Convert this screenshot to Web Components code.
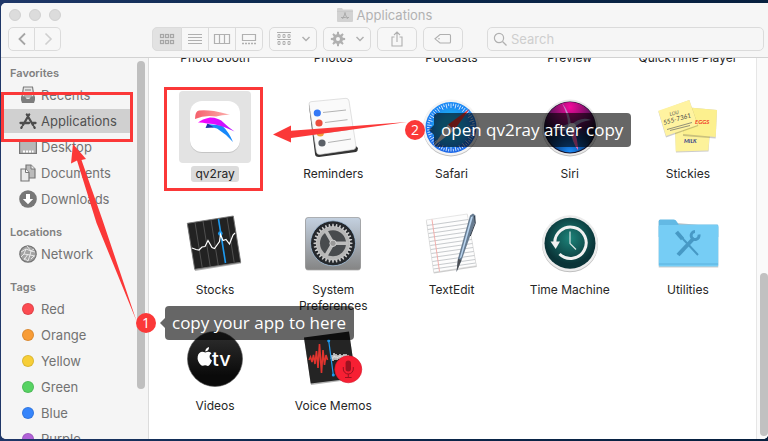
<!DOCTYPE html>
<html lang="en">
<head>
<meta charset="utf-8">
<title>Applications</title>
<style>
html, body { height: 100%; margin: 0; }
body { position: relative; overflow: hidden; background: linear-gradient(90deg, #1f3768, #0d2a50 35%, #07203f 100%); font-family: Inter, "Liberation Sans", sans-serif; }
</style>
</head>
<body>
<finder-window></finder-window>
<guide-overlay></guide-overlay>

<script>
const shadow = (el, html) => { el.attachShadow({ mode: 'open' }).innerHTML = html; };

const poly = (n, r1, r2, cx, cy) => {
  let p = [];
  for (let i = 0; i < n; i++) {
    for (const [o, r] of [[-0.3, r1], [-0.16, r2], [0.16, r2], [0.3, r1]]) {
      const a = (i + o) / n * Math.PI * 2;
      p.push((cx + Math.cos(a) * r).toFixed(2) + ',' + (cy + Math.sin(a) * r).toFixed(2));
    }
  }
  return p.join(' ');
};

const ticks = Array.from({ length: 60 }, (_, i) =>
  `<line x1="36" y1="12.5" x2="36" y2="${i % 2 ? 15 : 17}" transform="rotate(${i * 6} 36 36.5)"/>`).join('');

/* size: [width, height], body: svg markup */
const ICONS = {
  back: [26, 22, '<path d="M16 5.5 10.5 11 16 16.5" fill="none" stroke="#a5a5a5" stroke-width="1.8"/>'],
  forward: [26, 22, '<path d="M10.5 5.5 16 11l-5.5 5.5" fill="none" stroke="#cfcfcf" stroke-width="1.6"/>'],
  grid: [16, 12, '<g fill="none" stroke="#a6a6a6" stroke-width="1.2"><rect x="1.5" y="1.5" width="3" height="3"/><rect x="6.5" y="1.5" width="3" height="3"/><rect x="11.5" y="1.5" width="3" height="3"/><rect x="1.5" y="7.5" width="3" height="3"/><rect x="6.5" y="7.5" width="3" height="3"/><rect x="11.5" y="7.5" width="3" height="3"/></g>'],
  list: [14, 12, '<path d="M0 1.5h14M0 4.5h14M0 7.5h14M0 10.5h14" stroke="#b0b0b0"/>'],
  columns: [16, 12, '<path d="M.5 1.5h15v9H.5zM5.5 1.5v9M10.5 1.5v9" fill="none" stroke="#b0b0b0" stroke-width="1.2"/>'],
  gallery: [16, 12, '<path d="M1.5 1.5h13v6h-13z" fill="none" stroke="#b0b0b0" stroke-width="1.2"/><path d="M1 10.5h14" stroke="#b0b0b0" stroke-width="1.6" stroke-dasharray="2 1"/>'],
  arrange: [16, 14, '<g fill="none" stroke="#b0b0b0"><path d="M1 .5h14M1 7.5h14"/><path d="M2 2.5h2v3H2zM7 2.5h2v3H7zM12 2.5h2v3h-2zM2 9.5h2v3H2zM7 9.5h2v3H7zM12 9.5h2v3h-2z"/></g>'],
  chevron: [10, 10, '<path d="M1.5 3 5 6.5 8.5 3" fill="none" stroke="#b0b0b0" stroke-width="1.5"/>'],
  gear: [16, 16, `<polygon points="${poly(8, 5, 7.2, 8, 8)}" fill="#b0b0b0"/><circle cx="8" cy="8" r="2" fill="#f6f6f6"/>`],
  share: [14, 16, '<path d="M4.5 6H2v9h10V6H9.500M7 11V1.500M4 4l3-3 3 3" fill="none" stroke="#b0b0b0" stroke-width="1.100"/>'],
  tag: [18, 12, '<path d="M6 1.500h9.500q1 0 1 1v6.500q0 1-1 1H6L1 5.800z" fill="none" stroke="#b0b0b0" stroke-width="1.100"/><circle cx="5" cy="5.700" r=".8" fill="#b0b0b0"/>'],
  search: [14, 14, '<circle cx="6" cy="6" r="4.600" fill="none" stroke="#b0b0b0" stroke-width="1.200"/><path d="m9.500 9.500 4 4" stroke="#b0b0b0" stroke-width="1.300"/>'],
  folder: [16, 14, '<path d="M0 1q0-1 1-1h4l1 1.500h9q1 0 1 1V13q0 1-1 1H1q-1 0-1-1z" fill="#d2d2d2"/><path d="M0 3.500h16" stroke="#c4c4c4" stroke-width=".6"/><path d="M8.600 4.500 5.500 11M7.400 4.500 10.500 11M4 9.500h4.800M10 9.500h2" stroke="#aaa" stroke-width="1"/>'],
  recents: [18, 18, '<path d="M4.500 1h9L15 11H3z" fill="#e4e4e4" stroke="#7d7d7d" stroke-width="1.200"/><path d="M6 4h6M5.500 6.500h7M5 9h8" stroke="#7d7d7d"/><path d="M2 10.500h4q1 2.500 3 2.500t3-2.500h4V14l-1 3H3l-1-3z" fill="#7d7d7d"/>'],
  apps: [18, 18, '<g stroke="#4c4c4c" stroke-width="2.300" stroke-linecap="round" fill="none"><path d="M10.200 2.500 4 13M7.800 2.500 14 13M1.500 11h8.500M14 11h2.500M2.800 15l-.5.8M15.200 15l.5.8"/></g>'],
  desktop: [18, 14, '<rect x=".6" y=".6" width="16.800" height="12.800" fill="#b7b7b7" stroke="#777" stroke-width="1.200"/><path d="M4 11.500h2M7 11.500h2M10 11.500h2M13 11.500h1.500" stroke="#fff" stroke-width="1.800"/>'],
  docs: [18, 18, '<path d="M7 1h5l4 4v9H7z" fill="#bbb" stroke="#777" stroke-width="1.200"/><path d="M12 1v4h4" fill="#eee" stroke="#777"/><path d="M2 5h4.500L10 8.500V17H2z" fill="#e9e9e9" stroke="#777" stroke-width="1.200"/><path d="M6.500 5v3.500H10" fill="#fff" stroke="#777"/>'],
  downloads: [18, 18, '<circle cx="9" cy="9" r="8.800" fill="#777"/><path d="M7 4h4v5h3.200L9 14.300 3.800 9H7z" fill="#fff"/>'],
  network: [18, 18, '<circle cx="9" cy="9" r="8.200" fill="#a3a3a3" stroke="#747474" stroke-width="1.200"/><path d="M2 7 7 4l5 2 3-2M7 4 5 9l-3 3M5 9l6 1 1-4M11 10l-2 6-4-3M11 10l5 1M8 1l4 5 4 1M9 9l-4 6M12 14l3-3" stroke="#eee" stroke-width=".9" fill="none"/>'],

  qv2ray: [72, 72, `<defs><linearGradient id="a"><stop stop-color="#f55f6b"/><stop offset="1" stop-color="#fcb0ad"/></linearGradient><linearGradient id="b"><stop stop-color="#f0f"/><stop offset="1" stop-color="#b51cff"/></linearGradient></defs>
   <rect x="11" y="11" width="50" height="51" rx="12" fill="#000" opacity=".13"/><rect x="11" y="10" width="50" height="51" rx="12" fill="#fff"/>
   <path d="M27.500 33 43 34.500Q50 41 54 51 47 43 38 37.500L32 36z" fill="#1788fa"/><path d="m26.500 37 2-4.500 6.500 4z" fill="#2135a8"/>
   <path d="M19 31.500Q23 28 31 26.500 40 26.500 45 32 49 36 55.500 40.500 46 36 40 34.500 34 32.500 28 32.500 22 31 19 31.500z" fill="url(#b)"/>
   <path d="M16 28Q16 20 20 19.500 27 19 35 20 43 21.500 51 23.800 44 23.500 37 25.500 26 23.500 16 28z" fill="url(#a)"/>`],
  reminders: [72, 72, `<path d="M14 12q-2 0-2 3l6 48q0 3 4 3l37-5q2-1 2-4z" fill="#333"/>
   <path d="M12 13q0-2 2-2.300l35-3.400q2.600 0 3 2.700l7 45q0 3-2 3.400L23 63.500q-3 .3-3.600-2.500z" fill="#fafafa" stroke="#ccc" stroke-width=".6"/>
   <circle cx="20.300" cy="22" r="3.600" fill="#3478f6"/><circle cx="22" cy="32" r="3.600" fill="#eb4d3d"/><circle cx="23.300" cy="42" r="3.600" fill="#f19d38"/><circle cx="25" cy="52" r="3.600" fill="#5b6067"/>
   <path d="M26 21.500 49 19M28 31.500l22.500-2.800M29.500 41.500l22.500-3M31 51.500 54 48" stroke="#aaa" stroke-width=".9"/>`],
  safari: [72, 72, `<defs><linearGradient id="s" x2="0" y2="1"><stop stop-color="#1c8bf5"/><stop offset="1" stop-color="#1c67e8"/></linearGradient><radialGradient id="c"><stop offset=".5" stop-color="#1cb6f5"/><stop offset="1" stop-color="#1c90f0"/></radialGradient></defs>
   <circle cx="36" cy="37.500" r="28" fill="#000" opacity=".25"/><circle cx="36" cy="36.500" r="28" fill="#f4f4f4"/><circle cx="36" cy="36.500" r="25.500" fill="url(#s)"/><circle cx="36" cy="36.500" r="20" fill="url(#c)"/><g stroke="#e8f6ff" stroke-width=".8">${ticks}</g>
   <path d="M54.500 18 33 33.500l6 6z" fill="#fb3b34"/><path d="M18 55.500 33 33.500l6 6z" fill="#f3f3f3"/>`],
  siri: [72, 72, `<defs><radialGradient id="r" cx=".5" cy=".1" r=".65"><stop stop-color="#f4099c"/><stop offset=".55" stop-color="#741165"/><stop offset="1" stop-color="#100f25"/></radialGradient><radialGradient id="t" cx=".5" cy="1" r=".6"><stop stop-color="#1d8fff"/><stop offset="1" stop-color="#0080ff" stop-opacity="0"/></radialGradient></defs>
   <circle cx="36" cy="37.500" r="28" fill="#000" opacity=".25"/><circle cx="36" cy="36.500" r="28" fill="#e9e9e9"/><circle cx="36" cy="36.500" r="26" fill="#17122e"/><circle cx="36" cy="36.500" r="25.500" fill="url(#r)"/><circle cx="36" cy="36.500" r="25" fill="url(#t)"/>
   <path d="M28 12q8 10 9 22 10-9 20-5-11 1-17 8 2 14 4 22-6-8-8-20-9 2-21-2 11-1 19-4 0-9-6-21z" fill="#baf0ff" opacity=".55"/><path d="M40 38q4 12 4 21-6-8-6-19z" fill="#ff5cb5"/><circle cx="38" cy="36" r="4" fill="#fff" opacity=".8"/>`],
  stickies: [72, 72, `<path d="m23 36 35 4-1.500 20.500L24 61.500z" fill="#000" opacity=".2"/><path d="m23 36 35 4-1.700 19.500-32.600 1z" fill="#fdf29b"/>
   <path d="m32 16 33 3-1.300 28.500L31 45z" fill="#000" opacity=".2"/><path d="m32 16 33 3-1.300 27L31 43z" fill="#fcf08e"/>
   <path d="M6.300 20.500 37.300 9l9 26L14 46.500z" fill="#000" opacity=".2"/><path d="M6.300 19.700 37.300 9l8.400 25L14 45z" fill="#fff3a0"/>
   <g font-family="Lato, sans-serif" font-style="italic"><text x="18" y="25" font-size="5" fill="#555" transform="rotate(-14 18 25)">LOU</text><text x="12" y="34" font-size="6.500" fill="#444" transform="rotate(-16 12 34)">555-7361</text><text x="43" y="33" font-size="6" font-weight="700" fill="#f03c28">EGGS</text><text x="32" y="52" font-size="5.500" font-weight="700" fill="#26348a">MILK</text></g><path d="m15 38.500 25-7M18 39.500l20-5" stroke="#666" stroke-width=".7"/>`],
  stocks: [72, 72, `<path d="M8.300 17.500 54.300 10 62 56.500 16 64z" fill="#000" opacity=".3"/><path d="M8.300 16.300 54.300 9l7.400 46.300-46 7z" fill="#222" stroke="#777" stroke-width=".9"/>
   <path d="m16 15.500 7.200 45M24 14.200l7.200 45M32 13l7.200 45M48 10.500l7.200 45" stroke="#5c5c5c" stroke-width=".8"/>
   <path d="m39.500 12 7 44" stroke="#1e9af0" stroke-width="1.600"/><circle cx="41.300" cy="26.500" r="2.300" fill="#1e9af0"/>
   <path d="m13 41 4 1.500 3 .5 3-3 3-.5 3-6 4 7 2.500 1 5-7 1-7 2.500 6 3-1 3.500 4.500 3.500-9 2-2" fill="none" stroke="#fff" stroke-width="1.200"/>`],
  prefs: [72, 72, `<defs><linearGradient id="p" x2="0" y2="1"><stop stop-color="#c4d1e0"/><stop offset="1" stop-color="#858585"/></linearGradient></defs>
   <rect x="8.500" y="11.500" width="55" height="52" rx="2.500" fill="#000" opacity=".25"/><rect x="8.500" y="10.500" width="55" height="52" rx="2.500" fill="url(#p)" stroke="#888" stroke-width=".6"/>
   <circle cx="36" cy="36.300" r="22.500" fill="#25282c" stroke="#a6c2dc" stroke-width=".8"/><polygon points="${poly(32, 17, 19.5, 36, 36.3)}" fill="#c9c9c9"/><circle cx="36" cy="36.300" r="16.500" fill="#b6b6b6"/><circle cx="36" cy="36.300" r="13" fill="#484b4e"/>
   <path d="M36 36.300H51M36 36.300 28.500 23.300M36 36.300 28.500 49.300" stroke="#bcbcbc" stroke-width="3.600"/><circle cx="36" cy="36.300" r="3.200" fill="#999" stroke="#ddd" stroke-width=".8"/>`],
  textedit: [72, 72, `<path d="M11.300 14 52.300 8l9.500 52-43 6.500z" fill="#000" opacity=".2"/><path d="M11.300 13 52.300 7l9 51.700-42.600 6.600z" fill="#fdfdfd" stroke="#ccc" stroke-width=".5"/>
   <path d="M12 18.500 53.300 12.500M12.800 22.500 54 16.500M13.500 26.500 54.700 20.500M14 30.500 55.400 24.500M14.700 34.500 56 28.500M15.300 38.500 56.700 32.500M15.800 42.500 57.400 36.500M16.300 46.500 58 40.500M17 50.500 58.700 44.500M17.500 54.500 59.400 48.500M18 58.500 60 52.500M18.500 62 60.500 56" stroke="#b9bcc0" stroke-width=".8"/><path d="m17 12.500 7.500 52" stroke="#f2a7a4" stroke-width=".9"/>
   <path d="m55 8.500 3-2 2.500 2-.5 7L47 52l-5.500 13L43 51.500z" fill="#687c91"/><path d="m56 10 2-.8L46.500 50l-2 2z" fill="#b9d5f0"/><path d="m43 52 3.500 1-5 12z" fill="#4c4f54"/><path d="m59.500 9 .8 7-5 13" fill="none" stroke="#333c48" stroke-width="1"/>`],
  time: [72, 72, `<defs><radialGradient id="m" cy=".4"><stop stop-color="#1c8379"/><stop offset="1" stop-color="#0a3438"/></radialGradient></defs>
   <circle cx="36" cy="37.300" r="28" fill="#000" opacity=".25"/><circle cx="36" cy="36.300" r="28" fill="#ececec"/><circle cx="36" cy="36.300" r="25.500" fill="url(#m)"/>
   <path d="M20.800 36.500A15.700 15.700 0 1 1 25.500 47" fill="none" stroke="#f1f1f1" stroke-width="3"/><path d="M16.500 34.500h9.500l-4.300 7.500z" fill="#f1f1f1"/><path d="M36 24.500v12l6 6" fill="none" stroke="#d9e6e4" stroke-width="1.200"/>`],
  utilities: [72, 72, `<path d="M6.700 14v46.500h59.600V20z" fill="#000" opacity=".2"/><path d="M6.700 14q0-1.500 1.500-1.500h13.500q2 0 3 2l2 3H65q1.300 0 1.300 1.300V30H6.700z" fill="#63b9e4"/><path d="M6.700 19.500q0-1.500 1.500-1.500H65q1.300 0 1.300 1.500V58q0 1.500-1.300 1.500H8.200q-1.500 0-1.500-1.500z" fill="#76cdf5"/><path d="M7 57h59" stroke="#56a9d7" stroke-width=".8"/>
   <g stroke="#4799c5" fill="none"><path d="m27 27 5 6 14 15" stroke-width="2"/><path d="m24.500 25 6 7" stroke-width="4"/><path d="m42 31-16 17" stroke-width="4"/><path d="M47 27.500a4 4 0 1 1-4-3" stroke-width="3"/></g>`],
  tv: [72, 72, `<defs><linearGradient id="v" x2="0" y2="1"><stop stop-color="#303030"/><stop offset=".8" stop-color="#0a0a0a"/></linearGradient></defs>
   <circle cx="36" cy="36" r="27.500" fill="url(#v)" stroke="#555" stroke-width=".6"/>
   <path d="M26.500 29.500q2-1.200 4-.6 1.300.3 2 1.400-2.500 1.700-1.700 4.600.5 1.800 2.200 2.600-.7 2.300-2.500 4.500-1.300 1.400-3 .6-1.300-.6-2.800 0-1.700.8-3.100-.8-3.600-4.200-2.900-8.400.8-4 4.300-4.600 1.700 0 3.500.7z" fill="#fff"/><path d="M26.300 28.500q0-3.300 3.700-4.600.2 3.700-3.700 4.600z" fill="#fff"/>
   <text x="33" y="42.500" font-family="Inter, sans-serif" font-size="20" font-weight="500" fill="#fff">tv</text>`],
  memos: [72, 72, `<path d="M7 15.500 52 10l7 46-45 6z" fill="#000" opacity=".3"/><path d="m7 14.500 45-6 6.700 46.500-45 5.500z" fill="#242424"/>
   <path d="m12 37 1.500-3 1.500 5 1.500-7 1.500 9 1.500-13 1.500 17 1.500-24 2 29 1.500-23 1.500 15 1.500-10 1.500 5" fill="none" stroke="#e0342e" stroke-width="1.600"/>
   <path d="m34 36 1-4 1 6 1-8 1 7 1-6 1 6 1-5 1 4 1-5 1 5 1-4 1 3 1-4 1 5 1-5 1 5 1-4 1 3 2-1" fill="none" stroke="#ddd" stroke-width="1"/>
   <path d="m31.700 17.700 4.600 34.300" stroke="#1e9af0" stroke-width="1.200"/><circle cx="31.700" cy="17.700" r="1.500" fill="#1e9af0"/><circle cx="36.300" cy="52" r="1.500" fill="#1e9af0"/>
   <circle cx="51.300" cy="46.300" r="13.500" fill="#f71f33" stroke="#d5182a" stroke-width=".6"/><rect x="48.600" y="37.500" width="5.400" height="11" rx="2.700" fill="#9c1220"/><path d="M46.300 44v2a5 5 0 0 0 10 0v-2M51.300 51v3.500M48 54.500h6.600" fill="none" stroke="#9c1220" stroke-width="1"/>`],
  blank: [72, 72, '<rect x="11" y="10" width="50" height="50" rx="12" fill="#ddd"/>']
};

customElements.define('ui-icon', class extends HTMLElement {
  connectedCallback() {
    const [w, h, body] = ICONS[this.getAttribute('name')];
    shadow(this, `<style>:host{display:inline-flex;flex:none}svg{display:block;overflow:visible}</style>
      <svg width="${w}" height="${h}" viewBox="0 0 ${w} ${h}" aria-hidden="true">${body}</svg>`);
  }
});

customElements.define('tool-button', class extends HTMLElement {
  connectedCallback() {
    shadow(this, `<style>
      :host{display:flex;width:var(--w,48px)}
      button{box-sizing:border-box;width:100%;height:24px;padding:0;display:flex;align-items:center;justify-content:center;gap:9px;border:1px solid #dbdbdb;border-radius:5px;background:#f7f7f7}
      :host([segment]) button{border-radius:0;border-left-width:0}
      :host([segment=first]) button{border-left-width:1px;border-radius:5px 0 0 5px}
      :host([segment=last]) button{border-radius:0 5px 5px 0}
      :host([pressed]) button{background:#e2e2e2}
      </style><button type="button" aria-label="${this.getAttribute('label')}"><slot></slot></button>`);
  }
});

customElements.define('finder-toolbar', class extends HTMLElement {
  connectedCallback() {
    shadow(this, `<style>
      :host{display:block;box-sizing:border-box;height:55px;border-bottom:1px solid #d2d2d2;background:#f6f6f6}
      .title{display:grid;grid-template-columns:1fr auto 1fr;height:24px;align-items:center}
      .lights{display:flex;gap:8px;padding-left:8px}
      .lights button{width:12px;height:12px;padding:0;border-radius:50%;border:1px solid #d1d1d1;background:#dcdcdc}
      h1{margin:0;display:flex;align-items:center;gap:4px;font-size:13px;line-height:16px;font-weight:400;color:#b2b2b2}
      .tools{display:flex;padding:0 4px 0 7px}
      .group{display:flex}
      .nav{--w:26px;margin-right:91px}
      .nav .first{--w:27px}
      .views{--w:27px;margin-right:6px}
      .views .first{--w:30px}
      .actions{gap:6px;margin-right:24px}
      .small{--w:40px}
      label{box-sizing:border-box;flex:1;min-width:0;height:24px;display:flex;align-items:center;gap:4px;padding:0 5px;border:1px solid #dbdbdb;border-radius:5px}
      input{flex:1;min-width:0;border:0;padding:0;outline:0;background:none;font:13px/16px Inter,sans-serif}
      input::placeholder{color:#cecece;opacity:1}
      </style>
      <div class="title"><div class="lights"><button aria-label="Close"></button><button aria-label="Minimize"></button><button aria-label="Zoom"></button></div>
        <h1><ui-icon name="folder"></ui-icon>Applications</h1></div>
      <div class="tools">
        <div class="group nav"><tool-button class="first" label="Back" segment="first"><ui-icon name="back"></ui-icon></tool-button><tool-button label="Forward" segment="last"><ui-icon name="forward"></ui-icon></tool-button></div>
        <div class="group views"><tool-button class="first" label="Icons" segment="first" pressed><ui-icon name="grid"></ui-icon></tool-button><tool-button label="List" segment="mid"><ui-icon name="list"></ui-icon></tool-button><tool-button label="Columns" segment="mid"><ui-icon name="columns"></ui-icon></tool-button><tool-button label="Gallery" segment="last"><ui-icon name="gallery"></ui-icon></tool-button></div>
        <div class="group actions"><tool-button label="Group"><ui-icon name="arrange"></ui-icon><ui-icon name="chevron"></ui-icon></tool-button><tool-button label="Action"><ui-icon name="gear"></ui-icon><ui-icon name="chevron"></ui-icon></tool-button><tool-button class="small" label="Share"><ui-icon name="share"></ui-icon></tool-button><tool-button class="small" label="Tags"><ui-icon name="tag"></ui-icon></tool-button></div>
        <label aria-label="Search"><ui-icon name="search"></ui-icon><input type="search" placeholder="Search"></label>
      </div>`);
  }
});

customElements.define('side-item', class extends HTMLElement {
  connectedCallback() {
    const color = this.getAttribute('color');
    shadow(this, `<style>
      :host{display:block}
      a{display:flex;align-items:center;gap:4px;height:24px;padding-left:18px;margin-right:16px;font-size:13px;line-height:16px;color:#727272;text-decoration:none}
      :host([current]) a{background:#d0d0d0;color:#505050}
      .mark{width:18px;display:flex;justify-content:center}
      .dot{box-sizing:border-box;width:12px;height:12px;border-radius:50%;background:${color};border:1px solid #0000001c}
      </style><a href="#"><span class="mark">${color ? '<i class="dot"></i>' : `<ui-icon name="${this.getAttribute('icon')}"></ui-icon>`}</span><span><slot></slot></span></a>`);
  }
});

customElements.define('side-section', class extends HTMLElement {
  connectedCallback() {
    shadow(this, `<style>
      :host{display:block}
      h2{margin:0;padding-left:9px;font-size:11px;line-height:20px;font-weight:600;color:#808080}
      div{display:flex;flex-direction:column;gap:2px}
      </style><h2>${this.getAttribute('heading')}</h2><div><slot></slot></div>`);
  }
});

customElements.define('finder-sidebar', class extends HTMLElement {
  connectedCallback() {
    shadow(this, `<style>
      :host{display:block;position:relative;overflow:hidden;background:#f5f5f5;border-right:1px solid #dcdcdc}
      nav{display:flex;flex-direction:column;gap:11px;padding-top:5px}
      .thumb{position:absolute;right:3px;top:3px;width:8px;height:86%;border-radius:4px;background:#bfbfbf}
      </style>
      <nav>
      <side-section heading="Favorites"><side-item icon="recents">Recents</side-item><side-item icon="apps" current>Applications</side-item><side-item icon="desktop">Desktop</side-item><side-item icon="docs">Documents</side-item><side-item icon="downloads">Downloads</side-item></side-section>
      <side-section heading="Locations"><side-item icon="network">Network</side-item></side-section>
      <side-section heading="Tags"><side-item color="#fc4b51">Red</side-item><side-item color="#f89c36">Orange</side-item><side-item color="#f7ce37">Yellow</side-item><side-item color="#57d363">Green</side-item><side-item color="#3685fb">Blue</side-item><side-item color="#b162d8">Purple</side-item></side-section>
      </nav><div class="thumb"></div>`);
  }
});

customElements.define('app-tile', class extends HTMLElement {
  connectedCallback() {
    shadow(this, `<style>
      :host{display:block}
      a{display:flex;flex-direction:column;align-items:center;gap:3px;color:#262626;text-decoration:none;font-size:12px;line-height:16px;text-align:center}
      ui-icon{border-radius:4px}
      .name{padding:0 4px;border-radius:3px;max-width:108px}
      :host([selected]) ui-icon{background:#e3e3e3}
      :host([selected]) .name{background:#dcdcdc}
      </style><a href="#"><ui-icon name="${this.getAttribute('icon')}"></ui-icon><span class="name"><slot></slot></span></a>`);
  }
});

customElements.define('app-grid', class extends HTMLElement {
  connectedCallback() {
    shadow(this, `<style>
      :host{display:flex;overflow:hidden;background:#fff;min-width:0}
      .grid{flex:1;display:grid;grid-template-columns:repeat(5,1fr);grid-auto-rows:116px;margin-top:-83px;padding:0 9px 0 7px}
      .track{flex:none;width:11px;border-left:1px solid #e6e6e6;background:#fafafa;display:flex;flex-direction:column;justify-content:flex-end;align-items:flex-end;padding-bottom:3px}
      .thumb{width:8px;height:43%;border-radius:4px;background:#c1c1c1}
      </style><div class="grid"><slot></slot></div><div class="track"><div class="thumb"></div></div>`);
  }
});

customElements.define('finder-window', class extends HTMLElement {
  connectedCallback() {
    shadow(this, `<style>
      :host{display:block;box-sizing:border-box;height:100%;padding:3px 0 2px 1px}
      main{height:100%;display:grid;grid-template-rows:auto minmax(0,1fr);border-radius:5px 0 5px 5px;overflow:hidden;background:#f6f6f6}
      .body{display:grid;grid-template-columns:148px minmax(0,1fr);min-height:0}
      </style>
      <main><finder-toolbar></finder-toolbar><div class="body"><finder-sidebar></finder-sidebar>
      <app-grid>
        <app-tile icon="blank">Photo Booth</app-tile><app-tile icon="blank">Photos</app-tile><app-tile icon="blank">Podcasts</app-tile><app-tile icon="blank">Preview</app-tile><app-tile icon="blank">QuickTime Player</app-tile>
        <app-tile icon="qv2ray" selected>qv2ray</app-tile><app-tile icon="reminders">Reminders</app-tile><app-tile icon="safari">Safari</app-tile><app-tile icon="siri">Siri</app-tile><app-tile icon="stickies">Stickies</app-tile>
        <app-tile icon="stocks">Stocks</app-tile><app-tile icon="prefs">System Preferences</app-tile><app-tile icon="textedit">TextEdit</app-tile><app-tile icon="time">Time Machine</app-tile><app-tile icon="utilities">Utilities</app-tile>
        <app-tile icon="tv">Videos</app-tile><app-tile icon="memos">Voice Memos</app-tile>
      </app-grid></div></main>`);
  }
});

customElements.define('step-note', class extends HTMLElement {
  connectedCallback() {
    shadow(this, `<style>
      :host{position:absolute;display:flex;align-items:center}
      b{width:20px;height:20px;border-radius:50%;background:#fb3838;color:#fff;font:400 14px/20px "Open Sans",sans-serif;text-align:center}
      i{margin-left:4px;border:5px solid transparent;border-left-width:0;border-right-color:rgba(0,0,0,.6)}
      span{box-sizing:border-box;height:34px;padding:0 8px 0 7px;border-radius:4px;background:rgba(0,0,0,.6);color:#fff;font:17px/34px "Open Sans",sans-serif;white-space:nowrap}
      </style><b>${this.getAttribute('step')}</b><i></i><span><slot></slot></span>`);
  }
});

customElements.define('guide-overlay', class extends HTMLElement {
  connectedCallback() {
    shadow(this, `<style>
      :host{position:absolute;inset:0;pointer-events:none}
      svg{position:absolute;left:0;top:0;overflow:visible}
      .one{left:136px;top:306px}
      .two{left:405px;top:113px}
      </style>
      <svg width="768" height="441" viewBox="0 0 768 441" aria-hidden="true">
        <g fill="none" stroke="#fb3838" stroke-width="3"><rect x="2.500" y="93.500" width="129" height="47"/><rect x="165.500" y="88.500" width="96" height="101"/></g>
        <g fill="#fb3838"><path d="m73 144 13 15-4.500 1 21 60 34 101-40-98-19.500-62.500-6 3z"/><path d="m273 134.500 18-9v5.300L407 122l-116 16v4.500z"/></g>
      </svg>
      <step-note class="one" step="1">copy your app to here</step-note>
      <step-note class="two" step="2">open qv2ray after copy</step-note>`);
  }
});
</script>
</body>
</html>
